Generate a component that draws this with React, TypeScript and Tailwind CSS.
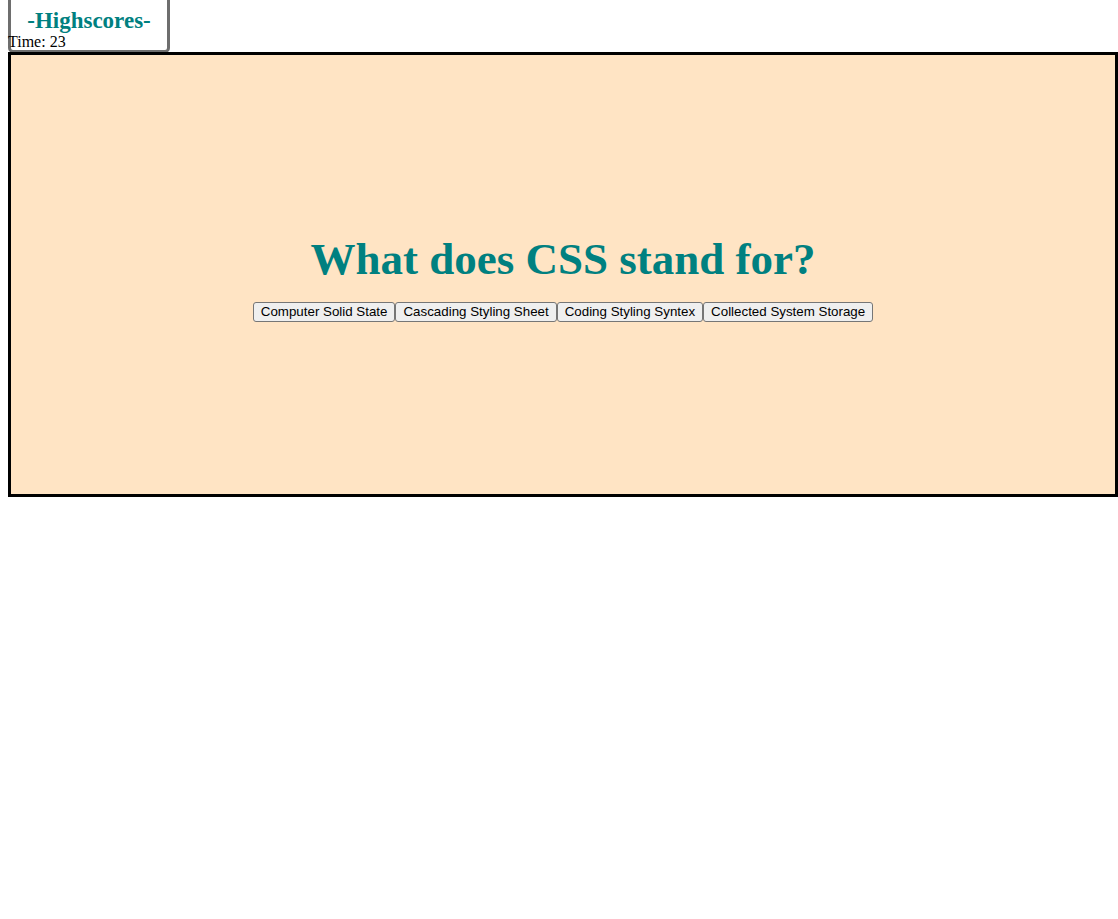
import React from 'react';

const answers = [
  'Computer Solid State',
  'Cascading Styling Sheet',
  'Coding Styling Syntex',
  'Collected System Storage',
];

export default function App() {
  return (
    <div className="min-h-screen bg-white px-2 font-['Liberation_Serif',serif] text-black">
      <div className="-mt-[4px] flex h-[57px] w-[162px] justify-center rounded-b-[5px] border-[3px] border-[#6e6e6e] bg-white">
        <h3 className="pt-[9px] text-[23px] font-bold leading-[26px] text-[#008080]">-Highscores-</h3>
      </div>
      <div className="-mt-[20px] text-base leading-[18px]">Time: 23</div>

      <div className="mt-[1px] flex h-[445px] w-[1110px] flex-col items-center justify-center border-[3px] border-black bg-[#ffe4c4]">
        <h1 className="mt-[6px] text-[45px] font-bold leading-[52px] text-[#008080]">What does CSS stand for?</h1>
        <div className="mt-[17px] flex">
          {answers.map((a) => (
            <button
              key={a}
              className="rounded-[3px] border border-[#767676] bg-[#efefef] px-[7px] py-[1px] font-['Liberation_Sans',Arial,sans-serif] text-[13.33px] leading-[16px] text-black"
            >
              {a}
            </button>
          ))}
        </div>
      </div>
    </div>
  );
}
